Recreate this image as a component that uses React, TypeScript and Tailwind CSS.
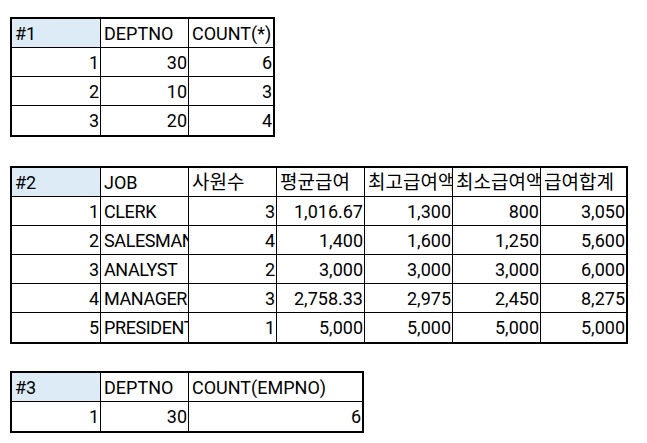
import React from 'react';

type Cell = { text: string; align: 'left' | 'right'; head?: boolean; ko?: boolean; tight?: boolean };

interface SheetTableProps {
  widths: number[];
  rows: Cell[][];
  className?: string;
}

// Excel-like block: 2px outer frame, 1px grid lines, clipped cell text
function SheetTable({ widths, rows, className }: SheetTableProps) {
  return (
    <div className={`inline-flex flex-col border-2 border-black ${className ?? ''}`}>
      {rows.map((row, r) => (
        <div key={r} className={`flex h-[29px] ${r < rows.length - 1 ? 'border-b border-black' : ''}`}>
          {row.map((cell, c) => (
            <div
              key={c}
              style={{ width: widths[c] }}
              className={`flex shrink-0 items-center overflow-hidden whitespace-nowrap pt-[1px] leading-[22px] ${
                cell.ko ? 'text-[19px]' : 'text-[18px]'
              } ${cell.tight ? 'tracking-[-0.4px]' : ''} ${c < row.length - 1 ? 'border-r border-black' : ''} ${
                cell.head ? 'bg-[#ddebf7]' : 'bg-white'
              } ${cell.align === 'right' ? 'justify-end pr-[1px]' : 'justify-start pl-[3px]'}`}
            >
              {cell.text}
            </div>
          ))}
        </div>
      ))}
    </div>
  );
}

const L = (text: string, head = false): Cell => ({ text, align: 'left', head });
const J = (text: string): Cell => ({ text, align: 'left', tight: true });
const K = (text: string): Cell => ({ text, align: 'left', ko: true });
const R = (text: string): Cell => ({ text, align: 'right' });

const table1: Cell[][] = [
  [L('#1', true), L('DEPTNO'), L('COUNT(*)')],
  [R('1'), R('30'), R('6')],
  [R('2'), R('10'), R('3')],
  [R('3'), R('20'), R('4')],
];

const jobs = [
  ['1', 'CLERK', '3', '1,016.67', '1,300', '800', '3,050'],
  ['2', 'SALESMAN', '4', '1,400', '1,600', '1,250', '5,600'],
  ['3', 'ANALYST', '2', '3,000', '3,000', '3,000', '6,000'],
  ['4', 'MANAGER', '3', '2,758.33', '2,975', '2,450', '8,275'],
  ['5', 'PRESIDENT', '1', '5,000', '5,000', '5,000', '5,000'],
];

const table2: Cell[][] = [
  [L('#2', true), L('JOB'), K('사원수'), K('평균급여'), K('최고급여액'), K('최소급여액'), K('급여합계')],
  ...jobs.map((j) => j.map((v, i) => (i === 1 ? J(v) : R(v)))),
];

const table3: Cell[][] = [
  [L('#3', true), L('DEPTNO'), L('COUNT(EMPNO)')],
  [R('1'), R('30'), R('6')],
];

export default function App() {
  return (
    <div
      className="w-[647px] h-[443px] bg-white text-black pl-[10px] pt-[17px] flex flex-col items-start"
      style={{ fontFamily: 'Roboto, "Noto Sans CJK KR", sans-serif' }}
    >
      <SheetTable widths={[89, 88, 84]} rows={table1} />
      <SheetTable widths={[89, 88, 88, 88, 88, 88, 85]} rows={table2} className="mt-[29px]" />
      <SheetTable widths={[89, 88, 173]} rows={table3} className="mt-[27px]" />
    </div>
  );
}
